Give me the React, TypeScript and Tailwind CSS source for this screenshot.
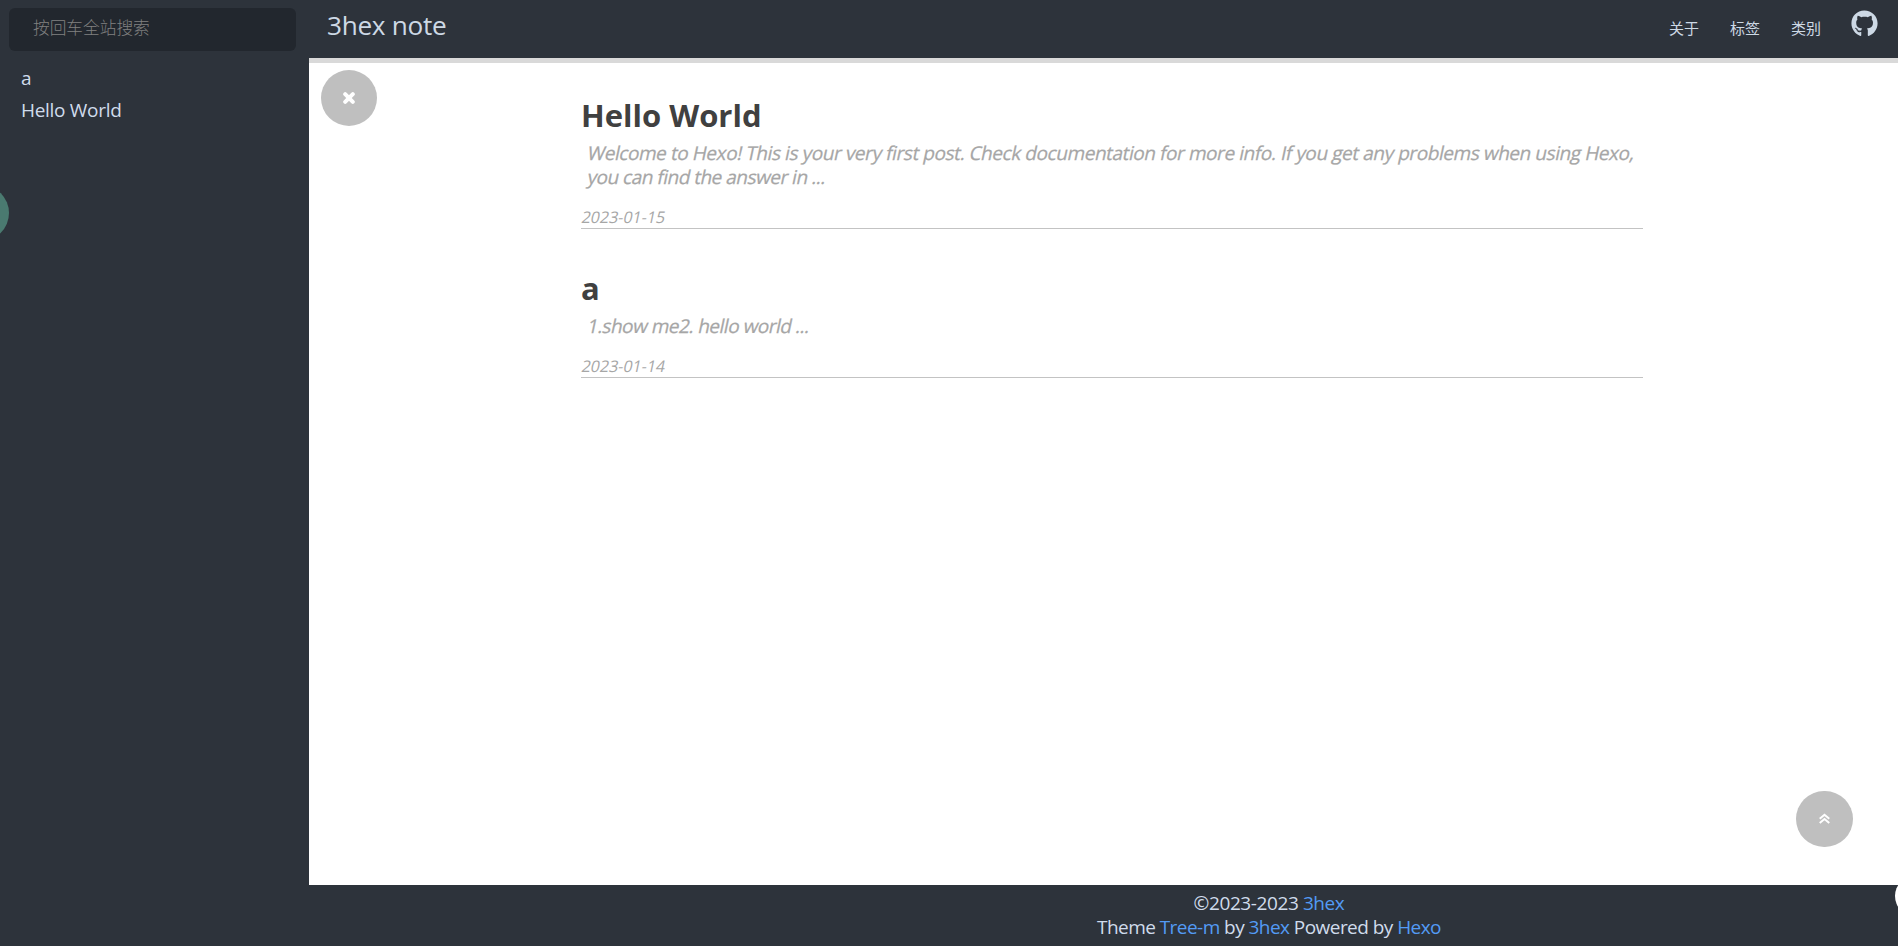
import { FaGithub } from "react-icons/fa";

const posts = [
  {
    title: "Hello World",
    lines: [
      "Welcome to Hexo! This is your very first post. Check documentation for more info. If you get any problems when using Hexo,",
      "you can find the answer in ...",
    ],
    date: "2023-01-15",
  },
  { title: "a", lines: ["1.show me2. hello world ..."], date: "2023-01-14" },
];

function Sidebar() {
  return (
    <aside className="h-full w-[309px] shrink-0 bg-[#2d333b] pt-2 pl-[9px]">
      <input
        className="block h-[43px] w-[287px] rounded-md bg-[#22272e] pr-4 pb-1 pl-6 text-[16.7px] font-light placeholder-[#808080] outline-none"
        placeholder="按回车全站搜索"
      />
      <ul className="mt-[11px] pl-3 text-[19px] leading-8 tracking-[-0.3px] text-[#d0dcec]">
        <li>a</li>
        <li>Hello World</li>
      </ul>
    </aside>
  );
}

function Header() {
  return (
    <header className="flex h-[63px] shrink-0 justify-between border-b-[5px] border-[#d9d9d9] bg-[#2d333b] pr-5 pl-[18px] text-[#cdd9e5]">
      <h1 className="text-[26.2px] leading-[51px] tracking-[-0.3px]">3hex note</h1>
      <nav className="flex gap-[31px] text-[15px] leading-[56px]">
        <a className="relative left-px">关于</a>
        <a className="relative left-px">标签</a>
        <a className="relative left-px">类别</a>
        <FaGithub className="mt-[10px] size-[27px]" />
      </nav>
    </header>
  );
}

export default function App() {
  return (
    <div className="relative flex h-[946px] w-[1898px] overflow-hidden bg-white font-['Open_Sans','Noto_Sans_CJK_SC',sans-serif]">
      <Sidebar />
      <div className="flex min-w-0 flex-1 flex-col">
        <Header />
        <main className="flex-1 pt-8 pl-[272px]">
          {posts.map((post) => (
            <article key={post.title} className="mb-[39px] w-[1062px] border-b border-[#c3c3c3]">
              <h2 className="text-[31px] leading-[40px] font-bold text-[#404040]">{post.title}</h2>
              <div className="mt-[6px] pl-[7px] text-[19px] leading-6 tracking-[-0.42px] text-[#a6a6a6] [-webkit-text-stroke:0.25px_#a6a6a6]">
                {post.lines.map((line) => (
                  <p key={line} className="w-fit -skew-x-12 whitespace-nowrap last:tracking-[-0.5px]">{line}</p>
                ))}
              </div>
              <p className="mt-[17px] w-fit -skew-x-12 pl-px text-[16px] leading-[22px] text-[#a6a6a6]">{post.date}</p>
            </article>
          ))}
        </main>
        <footer className="h-[61px] bg-[#2d333b] pt-[6px] pl-[331px] text-center text-[19px] leading-6 tracking-[-0.41px] text-[#d0dcec]">
          <p>©2023-2023 <a className="text-[#539bf5]">3hex</a></p>
          <p className="tracking-[-0.55px]">Theme <a className="text-[#539bf5]">Tree-m</a> by <a className="text-[#539bf5]">3hex</a> Powered by <a className="text-[#539bf5]">Hexo</a></p>
        </footer>
      </div>
      <button className="absolute top-[70px] left-[321px] flex size-14 items-center justify-center rounded-full bg-[#bfbfbf] text-white">
        <svg className="size-3" viewBox="0 0 12 12" stroke="currentColor" strokeWidth="4" strokeLinecap="round"><path d="M2.2 2.2l7.6 7.6M9.8 2.2L2.2 9.8" /></svg>
      </button>
      <button className="absolute top-[791px] left-[1796px] flex h-14 w-[57px] items-center justify-center rounded-full bg-[#bfbfbf] text-white">
        <svg className="mb-[2px] size-[11px]" viewBox="0 0 12 12" fill="none" stroke="currentColor" strokeWidth="2.1"><path d="M.8 6.3L6 1.8l5.2 4.5M.8 11L6 6.5l5.2 4.5" /></svg>
      </button>
      <div className="absolute top-[185px] left-[-47px] size-14 rounded-full bg-[#4a7a70]" />
      <div className="absolute top-[876px] left-[1895px] size-10 rounded-full bg-white" />
    </div>
  );
}
